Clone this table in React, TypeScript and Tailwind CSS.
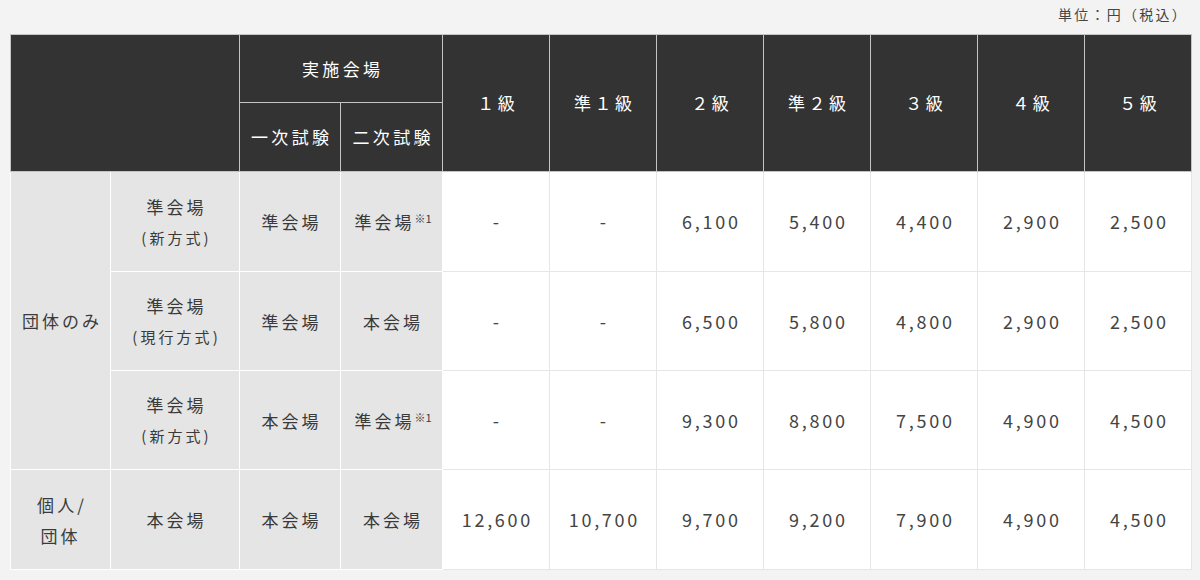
const font = { fontFamily: '"Noto Sans CJK JP", "Noto Sans", sans-serif' };

type Row = {
  group?: { label: React.ReactNode; span: number };
  kind: string;
  sub?: string;
  first: string;
  second: string;
  secondNote?: boolean;
  prices: string[];
  h: string;
};

const rows: Row[] = [
  {
    group: { label: "団体のみ", span: 3 },
    kind: "準会場",
    sub: "(新方式)",
    first: "準会場",
    second: "準会場",
    secondNote: true,
    prices: ["-", "-", "6,100", "5,400", "4,400", "2,900", "2,500"],
    h: "h-[100px]",
  },
  {
    kind: "準会場",
    sub: "(現行方式)",
    first: "準会場",
    second: "本会場",
    prices: ["-", "-", "6,500", "5,800", "4,800", "2,900", "2,500"],
    h: "h-[99px]",
  },
  {
    kind: "準会場",
    sub: "(新方式)",
    first: "本会場",
    second: "準会場",
    secondNote: true,
    prices: ["-", "-", "9,300", "8,800", "7,500", "4,900", "4,500"],
    h: "h-[99px]",
  },
  {
    group: {
      label: (
        <>
          個人/
          <br />
          団体
        </>
      ),
      span: 1,
    },
    kind: "本会場",
    first: "本会場",
    second: "本会場",
    prices: ["12,600", "10,700", "9,700", "9,200", "7,900", "4,900", "4,500"],
    h: "h-[100px]",
  },
];

const grades = ["１級", "準１級", "２級", "準２級", "３級", "４級", "５級"];

const th = "border border-[#c4c4c4] bg-[#333333] text-white font-normal text-[17px] tracking-[0.2em] indent-[0.2em] text-center align-middle";
const label = "border border-white bg-[#e5e5e5] text-[#3a3a3a] text-[17px] tracking-[0.18em] indent-[0.18em] text-center align-middle leading-[31px]";
const price = "border border-[#e6e6e6] bg-white text-[#444] text-[18px] tracking-[0.15em] indent-[0.15em] text-center align-middle";

export default function App() {
  return (
    <div className="w-[1200px] h-[580px] bg-[#f3f3f3]" style={font}>
      <div className="h-[34px] flex items-center justify-end pr-[12px] pb-[6px] text-[14px] tracking-[0.16em] text-[#444]">
        単位：円（税込）
      </div>
      <div className="px-[10px]">
        <table className="w-[1180px] table-fixed border-collapse border border-white">
          <colgroup>
            <col className="w-[100px]" />
            <col className="w-[129px]" />
            <col className="w-[101px]" />
            <col className="w-[102px]" />
            {grades.map((g) => (
              <col key={g} className="w-[107px]" />
            ))}
          </colgroup>
          <thead>
            <tr className="h-[68px]">
              <th className={th} colSpan={2} rowSpan={2} />
              <th className={th} colSpan={2}>
                実施会場
              </th>
              {grades.map((g) => (
                <th key={g} className={th} rowSpan={2}>
                  {g}
                </th>
              ))}
            </tr>
            <tr className="h-[69px]">
              <th className={th}>一次試験</th>
              <th className={th}>二次試験</th>
            </tr>
          </thead>
          <tbody>
            {rows.map((r, i) => (
              <tr key={i} className={r.h}>
                {r.group && (
                  <td className={label} rowSpan={r.group.span}>
                    {r.group.label}
                  </td>
                )}
                <td className={label}>
                  <div>{r.kind}</div>
                  {r.sub && <div className="text-[15px]">{r.sub}</div>}
                </td>
                <td className={label}>{r.first}</td>
                <td className={label}>
                  {r.second}
                  {r.secondNote && (
                    <sup className="text-[11px] tracking-normal relative -top-[6px] align-baseline">※1</sup>
                  )}
                </td>
                {r.prices.map((p, j) => (
                  <td key={j} className={price}>
                    {p}
                  </td>
                ))}
              </tr>
            ))}
          </tbody>
        </table>
      </div>
    </div>
  );
}
